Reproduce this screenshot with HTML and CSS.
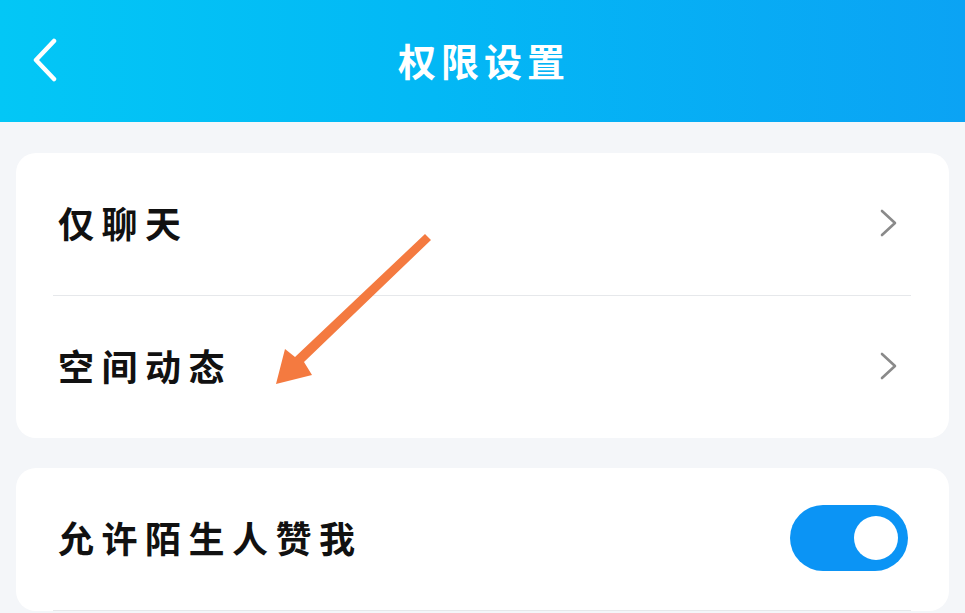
FILE: index.html
```html
<!DOCTYPE html>
<html lang="zh">
<head>
<meta charset="utf-8">
<title>权限设置</title>
<link rel="stylesheet" href="styles.css">
</head>
<body>
<div class="page">
  <header class="topbar">
    <span class="back">
      <svg width="30" height="44" viewBox="0 0 30 44"><path d="M24 3 L6 22 L24 41" fill="none" stroke="#fff" stroke-width="4.5" stroke-linecap="round" stroke-linejoin="round"/></svg>
    </span>
    <h1 class="title">权限设置</h1>
  </header>
  <main class="content">
    <section class="card">
      <div class="row">
        <span class="label">仅聊天</span>
        <svg class="chev" width="20" height="30" viewBox="0 0 20 30"><path d="M3 3 L16 15 L3 27" fill="none" stroke="#8a8a8a" stroke-width="2.6" stroke-linecap="round" stroke-linejoin="round"/></svg>
      </div>
      <div class="divider"></div>
      <div class="row">
        <span class="label">空间动态</span>
        <svg class="chev" width="20" height="30" viewBox="0 0 20 30"><path d="M3 3 L16 15 L3 27" fill="none" stroke="#8a8a8a" stroke-width="2.6" stroke-linecap="round" stroke-linejoin="round"/></svg>
      </div>
    </section>
    <section class="card">
      <div class="row">
        <span class="label">允许陌生人赞我</span>
        <span class="toggle"><span class="knob"></span></span>
      </div>
      <div class="divider"></div>
    </section>
  </main>
  <svg class="arrow" width="965" height="613" viewBox="0 0 965 613">
    <path d="M425 234 L431 240 L304 362 L312 375 L276 384 L285 349 L295 357 Z" fill="#f47a40"/>
  </svg>
</div>
</body>
</html>
```
FILE: styles.css
```css
* { box-sizing: border-box; }
html, body { margin: 0; padding: 0; }
body {
  width: 965px;
  height: 613px;
  overflow: hidden;
  background: #f4f6f9;
  font-family: "Noto Sans CJK SC", "Noto Sans", sans-serif;
}
.page { position: relative; width: 965px; height: 613px; }
.topbar {
  height: 122px;
  background: linear-gradient(90deg, #03c7f6 0%, #03b8f5 45%, #0ba3f4 100%);
  display: flex;
  align-items: center;
  justify-content: center;
  position: relative;
}
.back {
  position: absolute;
  left: 30px;
  top: 38px;
  display: flex;
}
.title {
  margin: 0;
  color: #fff;
  font-size: 38px;
  font-weight: 700;
  letter-spacing: 5px;
  line-height: 1;
  margin-left: 3px;
  margin-top: -2px;
}
.content {
  padding: 31px 16px 0;
  display: flex;
  flex-direction: column;
  gap: 30px;
}
.card {
  background: #fff;
  border-radius: 20px;
  overflow: hidden;
}
.row {
  height: 142px;
  display: flex;
  align-items: center;
  justify-content: space-between;
  padding: 0 41px 0 42px;
}
.label {
  font-size: 36px;
  font-weight: 700;
  color: #111;
  letter-spacing: 7.5px;
  line-height: 1;
  margin-top: -4px;
}
.chev { margin-right: 9px; margin-top: -3px; }
.divider {
  height: 1px;
  background: #e6e8eb;
  margin: 0 38px 0 37px;
}
.toggle {
  width: 118px;
  height: 66px;
  border-radius: 33px;
  background: #0b94f5;
  display: flex;
  align-items: center;
  justify-content: flex-end;
  padding-right: 10px;
  margin-top: -3px;
}
.knob {
  width: 44px;
  height: 44px;
  border-radius: 50%;
  background: #fff;
}
.arrow {
  position: absolute;
  left: 0;
  top: 0;
  pointer-events: none;
}
```
